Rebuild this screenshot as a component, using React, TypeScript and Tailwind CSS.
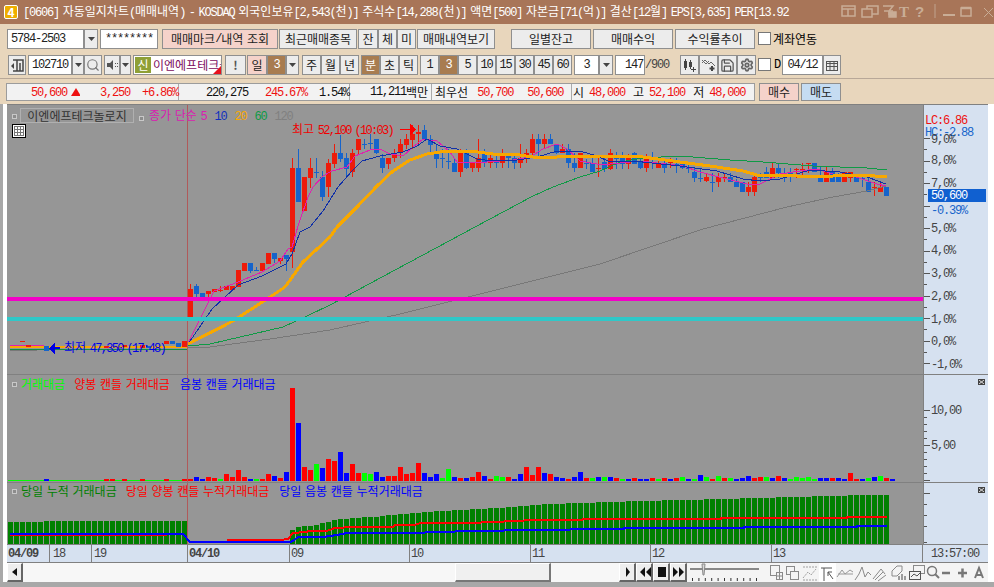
import React from "react";
import { Search, Save, Settings } from "lucide-react";

// hangul runs are full width, everything else is half width like Gulim
const T = ({ s, m = "tracking-[-1.2px]" }: { s: string; m?: string }) => (
  <>
    {s.split(/([가-힣 ]+)/).map((p, i) =>
      /^[가-힣 ]+$/.test(p) ? (
        <span key={i}>{p}</span>
      ) : (
        <span key={i} className={`font-['Liberation_Mono'] ${m}`}>
          {p}
        </span>
      )
    )}
  </>
);

type Candle = [number, number, number, number, "r" | "b"];

// wick top, body top, body bottom, wick bottom, x = 190 + 6 * index
const candles: Candle[] = [
  [285,290,319,319,"r"],[285,287,295,298,"b"],[294,294,298,298,"b"],[292,292,295,298,"r"],[290,290,293,293,"r"],
  [287,291,292,293,"r"],[287,287,291,291,"r"],[287,287,291,291,"r"],[271,271,288,288,"r"],[264,264,272,272,"r"],
  [264,264,272,274,"b"],[268,271,272,272,"b"],[264,264,272,272,"r"],[254,254,265,265,"r"],[254,254,260,264,"b"],
  [259,259,262,265,"r"],[256,256,260,272,"b"],[159,169,253,269,"r"],[150,169,203,203,"b"],[178,178,212,212,"r"],
  [159,169,179,189,"r"],[159,173,174,179,"b"],[172,178,198,202,"b"],[160,164,188,198,"r"],[145,154,165,169,"r"],
  [136,154,160,163,"b"],[154,159,170,179,"b"],[150,154,173,178,"r"],[140,140,151,156,"r"],[140,145,146,150,"b"],
  [135,144,145,150,"b"],[140,140,154,155,"b"],[155,159,169,174,"b"],[159,159,165,170,"r"],[150,154,159,163,"r"],
  [140,145,154,159,"r"],[135,140,146,150,"r"],[126,135,141,150,"r"],[126,133,135,145,"r"],[126,131,140,140,"b"],
  [136,140,146,154,"b"],[145,154,160,169,"b"],[150,159,160,169,"b"],[150,162,163,170,"b"],[160,164,173,173,"b"],
  [150,154,173,178,"r"],[150,154,169,170,"b"],[164,164,169,173,"r"],[140,159,169,173,"r"],[150,154,164,168,"b"],
  [154,159,164,169,"r"],[154,162,164,169,"b"],[150,154,164,169,"r"],[154,154,159,169,"b"],[154,159,164,170,"b"],
  [145,159,164,169,"r"],[150,154,159,164,"r"],[135,140,154,159,"r"],[135,140,145,159,"b"],[135,140,145,150,"r"],
  [135,140,145,145,"b"],[145,145,154,155,"b"],[145,150,154,154,"r"],[145,150,164,169,"b"],[154,164,169,173,"b"],
  [154,154,169,169,"r"],[160,164,165,170,"b"],[159,164,173,173,"b"],[159,169,170,178,"r"],[159,163,170,173,"b"],
  [150,154,170,171,"r"],[153,159,160,170,"b"],[153,159,165,170,"b"],[155,159,165,170,"r"],[153,154,165,165,"b"],
  [159,163,169,170,"b"],[155,159,169,173,"r"],[153,159,160,170,"b"],[159,164,169,169,"r"],[159,164,169,174,"b"],
  [159,162,164,169,"r"],[159,165,166,174,"b"],[164,164,169,170,"b"],[164,169,170,174,"b"],[169,173,179,183,"b"],
  [169,179,180,183,"b"],[174,178,182,183,"r"],[174,183,184,193,"b"],[174,178,183,188,"r"],[174,178,179,183,"r"],
  [174,178,183,183,"b"],[180,183,188,188,"b"],[183,183,193,193,"b"],[183,188,193,197,"r"],[174,178,193,197,"r"],
  [174,178,179,183,"b"],[168,173,179,179,"b"],[164,169,179,179,"r"],[164,169,174,179,"b"],[169,174,175,183,"b"],
  [169,174,175,183,"b"],[169,170,171,179,"r"],[164,170,171,179,"r"],[164,164,165,174,"r"],[164,164,173,173,"b"],
  [168,178,183,183,"b"],[168,173,183,183,"r"],[169,173,183,183,"b"],[174,178,183,183,"b"],[173,173,183,183,"r"],
  [173,173,179,183,"r"],[178,178,183,183,"b"],[178,179,180,188,"b"],[178,183,193,193,"b"],[183,188,189,197,"r"],
  [183,188,193,193,"r"],[188,188,197,197,"b"],
];

// pre open session squeezed at the left
const preOpen: [number, number, number, "r" | "b"][] = [
  [22,342,343,"r"],[28,346,348,"r"],[46,347,352,"b"],[106,347,349,"r"],[124,346,348,"r"],[142,346,349,"r"],
  [148,347,349,"b"],[166,342,345,"r"],[172,342,345,"b"],[178,344,348,"b"],[184,342,348,"r"],
];

const ma5 = "188,344 214,292 238,283 262,273 280,262 288,250 292,248 298,227 308,198 313,188 323,177 332,172 347,168 355,157 370,151 380,150 390,155 403,157 413,148 423,140 437,142 450,153 457,163 473,163 487,163 513,161 530,158 543,150 557,145 567,150 580,162 597,165 610,165 640,162 683,167 700,173 723,179 747,185 760,185 780,175 800,172 817,170 833,175 853,177 877,185 886,187";
const ma10 = "188,345 212,310 238,286 262,277 286,265 292,255 300,233 310,228 323,212 338,188 352,172 362,162 380,157 403,153 417,147 427,140 440,147 457,150 477,160 493,162 517,161 537,158 557,152 580,152 597,157 610,163 633,162 680,167 717,172 743,180 760,182 780,180 810,171 840,173 867,178 886,185";
const ma20 = "188,345 233,322 267,300 285,288 303,263 330,238 337,228 357,208 377,187 393,172 410,161 427,155 447,152 470,152 493,155 513,155 533,158 557,158 573,157 600,157 643,158 680,163 710,167 743,172 757,176 797,177 833,177 863,176 887,178";
const ma60 = "188,347 210,345 283,328 307,317 330,306 475,228 533,197 553,188 580,178 600,172 620,163 643,159 680,157 730,161 763,163 813,167 867,169 887,171";
const ma120 = "188,349 210,348 270,340 330,331 400,315 500,290 600,265 703,230 787,208 833,198 867,192 886,187";

const redSum = "10,536 167,536";
const redSum2 = "227,541 280,541 288,540 293,534 305,533 310,532 327,532 335,529 353,528 393,528 395,526 415,526 420,524 480,524 482,523 494,523 534,521 581,521 584,520 721,520 721,519 847,519 847,518 887,518";
const blueSum = "10,535 183,535 190,543 290,543 293,542 298,538 323,538 337,536 347,534 423,534 427,533 453,533 457,532 494,532 514,531 569,531 571,530 624,530 624,529 744,529 744,528 857,528 857,527 887,527";

// height and colour of the volume bars, x = 184 + 6 * index
const vol: [number, string][] = [
  [2,"r"],[2,"r"],[4,"b"],[2,"b"],[4,"r"],[3,"r"],[2,"g"],[7,"r"],[4,"r"],[11,"r"],[4,"r"],[2,"b"],[2,"g"],[2,"r"],[7,"r"],[5,"b"],[3,"r"],[9,"b"],
  [93,"r"],[58,"b"],[14,"r"],[11,"r"],[17,"g"],[13,"b"],[22,"r"],[20,"r"],[29,"b"],[8,"b"],[17,"r"],[8,"r"],[8,"g"],[7,"g"],[9,"b"],[4,"b"],[5,"r"],[5,"r"],
  [14,"r"],[7,"r"],[8,"r"],[18,"r"],[8,"b"],[4,"b"],[7,"b"],[3,"g"],[12,"g"],[4,"b"],[3,"r"],[3,"b"],[4,"r"],[9,"r"],[5,"b"],[2,"r"],[5,"g"],
  [4,"g"],[4,"r"],[2,"b"],[7,"b"],[14,"r"],[6,"r"],[14,"r"],[8,"b"],[7,"r"],[4,"b"],[3,"b"],[2,"r"],[4,"b"],[9,"b"],[3,"r"],[3,"g"],[4,"b"],[4,"g"],[4,"b"],
  [3,"r"],[2,"g"],[2,"b"],[3,"r"],[2,"b"],[2,"b"],[3,"r"],[2,"g"],[3,"r"],[2,"b"],[3,"r"],[4,"g"],[2,"b"],[2,"g"],[6,"b"],[4,"g"],[2,"r"],[5,"g"],[3,"r"],
  [3,"g"],[2,"b"],[3,"b"],[5,"b"],[3,"r"],[4,"r"],[4,"g"],[3,"b"],[5,"r"],[3,"b"],[2,"g"],[4,"g"],[3,"g"],[4,"g"],[2,"g"],[3,"b"],[3,"b"],[3,"r"],[3,"b"],
  [2,"b"],[8,"r"],[2,"r"],[2,"b"],[3,"g"],[4,"b"],[5,"g"],[3,"r"],[2,"b"],
];
const volColor: Record<string, string> = { r: "#ff0000", b: "#0000ff", g: "#00ff00" };

const sumTop: [number, number][] = [
  [290,533],[296,528],[308,527],[320,525],[326,523],[335,521],[340,520],[352,519],[370,518],[382,517],[400,515],[412,514],[424,513],[442,512],
  [497,509],[520,507],[545,505],[580,504],[615,503],[640,502],[680,501],[720,500],[755,499],[790,498],[830,497],[865,496],[886,496],
];
const topAt = (x: number) => {
  for (let i = 1; i < sumTop.length; i++) {
    if (x <= sumTop[i][0]) {
      const [x0, y0] = sumTop[i - 1];
      const [x1, y1] = sumTop[i];
      return Math.round(y0 + ((y1 - y0) * (x - x0)) / (x1 - x0));
    }
  }
  return 496;
};

const Line = ({ p, c, w = 1 }: { p: string; c: string; w?: number }) => (
  <polyline points={p} fill="none" stroke={c} strokeWidth={w} />
);

const Btn = ({ className = "", children }: { className?: string; children?: React.ReactNode }) => (
  <div className={`flex h-full shrink-0 items-center justify-center overflow-hidden border border-[#8f8f8f] text-[#222] ${className}`}>
    {children}
  </div>
);

const Drop = ({ className = "" }: { className?: string }) => (
  <Btn className={`bg-[#ececec] ${className}`}>
    <svg width="7" height="4"><polygon points="0,0 7,0 3.5,4" fill="#444" /></svg>
  </Btn>
);

const Square = () => <span className="mt-[1px] inline-block h-[5px] w-[5px] border border-[#c8c8c8] bg-[#8c8c8c]" />;

const CloseMini = () => (
  <div className="absolute right-[3px] top-[4px] flex h-[6px] w-[7px] items-center justify-center bg-[#444]">
    <svg width="5" height="4"><path d="M0 0L5 4M5 0L0 4" stroke="#ddd" /></svg>
  </div>
);

const axis1 = [
  ["9,0%", 139],["8,0%", 160],["7,0%", 183],["5,0%", 228],["4,0%", 250],["3,0%", 273],["2,0%", 296],["1,0%", 319],["0,0%", 341],["-1,0%", 364],
] as [string, number][];

const TitleIcons = () => (
  <svg width="153" height="24" viewBox="841 0 153 24" className="shrink-0" fill="none" stroke="#c9ad96" strokeWidth="1.5">
    <rect x="842" y="6" width="13" height="10" />
    <path d="M842 9H855M848 9V16" />
    <rect x="867" y="6" width="11" height="8" />
    <rect x="862" y="9" width="10" height="8" fill="#a87558" />
    <path d="M883 6H893L889 11V15M884 11H893" />
    <rect x="889" y="12" width="7" height="5" fill="#c9ad96" />
    <text x="899" y="17" fill="#c9ad96" stroke="none" fontSize="15" fontWeight="700" fontFamily="Liberation Serif">T</text>
    <text x="915" y="17" fill="#c9ad96" stroke="none" fontSize="15" fontWeight="700" fontFamily="Liberation Sans">?</text>
    <path d="M935 4V18" stroke="#b9957c" />
    <path d="M943 15H955" strokeWidth="2" />
    <rect x="961" y="8" width="10" height="8" />
    <path d="M961 8H971" strokeWidth="2.5" />
    <path d="M984 8L993 17M993 8L984 17" strokeWidth="1" />
  </svg>
);

const BottomIcons = () => (
  <svg width="218" height="20" viewBox="770 0 218 20" className="shrink-0" fill="none" stroke="#8a8a8a">
    <rect x="770.5" y="2.5" width="9" height="10" />
    <rect x="776.5" y="9.5" width="6" height="7" fill="#f4f4f4" />
    <path d="M776 13H783M779.5 9V17" />
    <rect x="786.5" y="3.5" width="8" height="8" />
    <rect x="790.5" y="8.5" width="8" height="8" fill="#f4f4f4" />
    <path d="M803 15L808 9L811 12L816 6M803 4H817M803 17H817" strokeDasharray="2 1" stroke="#a0a0a0" />
    <rect x="819" y="0" width="17" height="20" fill="#fff" stroke="none" />
    <path d="M821 5H832M824 5V18" stroke="#555" />
    <path d="M833 16L828 9M828 9V13M828 9H832" stroke="#555" />
    <path d="M837 14L842 7L845 11L850 7L853 9M838 11H853" stroke="#999" />
    <path d="M855 17L859 11L862 4L865 14L868 9L871 12" />
    <path d="M873 16L881 6L885 11M875 17L883 9M878 18L886 12" />
    <path d="M892 8L897 3H902V8L897 13H892Z" />
    <path d="M899 13V17M902 11V17M905 13V17" stroke="#444" />
    <rect x="913.5" y="2.5" width="11" height="8" />
    <rect x="909.5" y="8.5" width="11" height="8" fill="#f4f4f4" stroke="#555" />
    <path d="M911 14L914 11L917 13L920 10" stroke="#555" />
    <circle cx="932" cy="8" r="4.5" strokeWidth="1.5" stroke="#777" />
    <path d="M935 11L939 15" strokeWidth="2" stroke="#777" />
    <path d="M942 10H950" strokeWidth="2.5" stroke="#777" />
    <path d="M958 10H967M962.5 5.5V14.5" strokeWidth="2.5" stroke="#777" />
    <path d="M975 15L979 5L983 15M976.5 12H981.5" strokeWidth="2" stroke="#777" />
  </svg>
);

export default function App() {
  return (
    <div className="flex h-[587px] w-[994px] flex-col overflow-hidden bg-[#e8d6bc] font-['Noto_Sans_CJK_KR','Liberation_Sans',sans-serif] text-[12px] leading-[14px] [word-spacing:1px]">
      {/* title bar */}
      <div className="flex h-[24px] shrink-0 items-center bg-[#a87558] text-white">
        <div className="ml-[4px] flex h-[14px] w-[14px] items-center justify-center rounded-[2px] border border-white bg-[#efae00] text-[12px] font-bold">4</div>
        <div className="ml-[5px] w-[818px] overflow-hidden whitespace-nowrap pr-0">
          <T s="[0606] 자동일지차트(매매내역) - KOSDAQ 외국인보유[2,543(천)] 주식수[14,288(천)] 액면[500] 자본금[71(억)] 결산[12월] EPS[3,635] PER[13.92" />
        </div>
        <TitleIcons />
      </div>

      {/* toolbars */}
      <div className="mt-[5px] flex h-[20px] shrink-0 pl-[7px]">
        <Btn className="w-[77px] justify-start bg-white pl-[3px]"><T s="5784-2503" /></Btn>
        <Drop className="w-[14px]" />
        <Btn className="ml-[2px] w-[58px] bg-white"><T s="********" /></Btn>
        <Btn className="ml-[4px] w-[116px] bg-[#f5d2ca]"><T s="매매마크/내역 조회" /></Btn>
        <Btn className="ml-[1px] w-[78px] bg-[#ececec]">최근매매종목</Btn>
        <Btn className="ml-[1px] w-[20px] bg-[#ececec]">잔</Btn>
        <Btn className="w-[19px] bg-[#ececec]">체</Btn>
        <Btn className="w-[19px] bg-[#ececec]">미</Btn>
        <Btn className="ml-[1px] w-[78px] bg-[#ececec]">매매내역보기</Btn>
        <Btn className="ml-[16px] w-[80px] bg-[#ececec]">일별잔고</Btn>
        <Btn className="ml-[2px] w-[80px] bg-[#ececec]">매매수익</Btn>
        <Btn className="ml-[2px] w-[80px] bg-[#ececec]">수익률추이</Btn>
        <div className="ml-[3px] mt-[3px] h-[13px] w-[13px] border border-[#777] bg-white" />
        <div className="ml-[2px] flex items-center">계좌연동</div>
      </div>

      <div className="mt-[6px] flex h-[20px] shrink-0 pl-[8px]">
        <Btn className="w-[18px] bg-[#ececec]">
          <svg width="14" height="14" fill="none" stroke="#444" strokeWidth="1.5"><path d="M3 2H13V13H3" /><path d="M7 2V13M10 5V13" /><polygon points="1,8 4,5 4,11" fill="#444" stroke="none" /></svg>
        </Btn>
        <Btn className="ml-[2px] w-[44px] bg-white"><T s="102710" /></Btn>
        <Drop className="w-[12px]" />
        <Btn className="w-[18px] bg-[#ececec]"><Search size={14} color="#777" strokeWidth={2} /></Btn>
        <Btn className="ml-[2px] w-[16px] bg-[#ececec]">
          <svg width="12" height="12" fill="#555"><polygon points="1,4 4,4 7,1 7,11 4,8 1,8" /><rect x="9" y="4" width="1" height="1" /><rect x="9" y="7" width="1" height="1" /><rect x="11" y="4" width="1" height="1" /><rect x="11" y="7" width="1" height="1" /></svg>
        </Btn>
        <Drop className="w-[11px]" />
        <Btn className="relative ml-[2px] w-[89px] justify-start bg-white pl-[1px]">
          <span className="flex h-[16px] w-[16px] shrink-0 items-center justify-center bg-[#8fa035] text-white">신</span>
          <span className="ml-[2px] whitespace-nowrap text-[#7c0b5e]">이엔에프테크놀로지</span>
          <svg className="absolute bottom-0 right-0" width="8" height="8"><polygon points="8,0 8,8 0,8" fill="#e8101c" /></svg>
        </Btn>
        <Btn className="ml-[3px] w-[21px] bg-[#ececec] font-bold text-[#555]">!</Btn>
        <Btn className="ml-[1px] w-[20px] bg-[#f5d2ca]">일</Btn>
        <Btn className="w-[19px] bg-[#a87c50] text-white"><T s="3" /></Btn>
        <Drop className="w-[13px]" />
        <Btn className="ml-[3px] w-[19px] bg-[#ececec]">주</Btn>
        <Btn className="w-[19px] bg-[#ececec]">월</Btn>
        <Btn className="w-[19px] bg-[#ececec]">년</Btn>
        <Btn className="ml-[2px] w-[19px] bg-[#a87c50] text-white">분</Btn>
        <Btn className="w-[19px] bg-[#ececec]">초</Btn>
        <Btn className="w-[19px] bg-[#ececec]">틱</Btn>
        <Btn className="ml-[2px] w-[19px] bg-[#ececec]"><T s="1" /></Btn>
        <Btn className="w-[19px] bg-[#a87c50] text-white"><T s="3" /></Btn>
        <Btn className="w-[19px] bg-[#ececec]"><T s="5" /></Btn>
        <Btn className="w-[19px] bg-[#ececec]"><T s="10" /></Btn>
        <Btn className="w-[19px] bg-[#ececec]"><T s="15" /></Btn>
        <Btn className="w-[19px] bg-[#ececec]"><T s="30" /></Btn>
        <Btn className="w-[19px] bg-[#ececec]"><T s="45" /></Btn>
        <Btn className="w-[19px] bg-[#ececec]"><T s="60" /></Btn>
        <Btn className="ml-[2px] w-[25px] bg-white"><T s="3" /></Btn>
        <Drop className="w-[14px]" />
        <Btn className="ml-[2px] w-[30px] justify-end bg-white pr-[1px]"><T s="147" /></Btn>
        <div className="flex w-[24px] items-center text-[#444]"><T s="/900" /></div>
        <Btn className="ml-[11px] w-[19px] bg-[#ececec]">
          <svg width="15" height="14" fill="#444"><rect x="2" y="3" width="3" height="7" /><rect x="3" y="1" width="1" height="11" /><rect x="7" y="4" width="3" height="5" /><rect x="8" y="2" width="1" height="9" /><path d="M11 9h1v2h2v1h-2v2h-1v-2H9v-1h2z" /></svg>
        </Btn>
        <Btn className="w-[19px] bg-[#ececec]">
          <svg width="15" height="14" fill="none" stroke="#666"><path d="M1 5L4 2L8 6L10 4L14 8M1 2L5 6L8 3" /><path d="M11 8V13M8.5 10.5H13.5" stroke="#444" strokeWidth="2" /></svg>
        </Btn>
        <Btn className="w-[19px] bg-[#ececec]"><Save size={15} color="#555" strokeWidth={2} /></Btn>
        <Btn className="w-[19px] bg-[#ececec]"><Settings size={14} color="#666" strokeWidth={3} /></Btn>
        <div className="ml-[2px] mt-[3px] h-[13px] w-[13px] border border-[#777] bg-white" />
        <div className="ml-[3px] flex w-[7px] items-center"><T s="D" /></div>
        <Btn className="ml-[1px] w-[41px] bg-white"><T s="04/12" /></Btn>
        <Btn className="w-[18px] bg-[#ececec]">
          <svg width="12" height="11" fill="none" stroke="#555"><rect x="0.5" y="1.5" width="11" height="9" /><path d="M0 3.5H12M0 6.5H12M4 2V11M8 2V11" /></svg>
        </Btn>
      </div>

      <div className="mt-[3px] h-[1px] shrink-0 bg-[#b8a898]" />

      {/* quote line */}
      <div className="mt-[4px] flex h-[18px] shrink-0 pl-[6px]">
        <div className="flex h-full w-[749px] border border-[#9c9c9c] bg-[#f2f2f2] text-[#ee1111]">
          <div className="flex w-[172px] items-center border-r border-[#aaa]">
            <span className="ml-[24px]"><T s="50,600" /></span>
            <svg className="ml-[4px]" width="10" height="8"><polygon points="5,0 10,8 0,8" fill="#ee1111" /></svg>
            <span className="ml-[20px]"><T s="3,250" /></span>
            <span className="ml-[12px]"><T s="+6.86%" /></span>
          </div>
          <div className="flex w-[171px] items-center border-r border-[#aaa]">
            <span className="ml-[27px] text-[#111]"><T s="220,275" /></span>
            <span className="ml-[17px]"><T s="245.67%" /></span>
            <span className="ml-[12px] text-[#111]"><T s="1.54%" /></span>
          </div>
          <div className="flex w-[82px] items-center justify-end border-r border-[#aaa] pr-[3px] text-[#111]">
            <T s="11,211백만" />
          </div>
          <div className="flex w-[140px] items-center border-r border-[#aaa]">
            <span className="ml-[3px] text-[#111]">최우선</span>
            <span className="ml-[9px]"><T s="50,700" /></span>
            <span className="ml-[14px]"><T s="50,600" /></span>
          </div>
          <div className="flex flex-1 items-center">
            <span className="ml-[1px] text-[#111]">시</span>
            <span className="ml-[5px]"><T s="48,000" /></span>
            <span className="ml-[8px] text-[#111]">고</span>
            <span className="ml-[5px]"><T s="52,100" /></span>
            <span className="ml-[8px] text-[#111]">저</span>
            <span className="ml-[5px]"><T s="48,000" /></span>
          </div>
        </div>
        <Btn className="ml-[4px] w-[40px] bg-[#f5d2ca]">매수</Btn>
        <Btn className="ml-[2px] w-[40px] bg-[#c5dcf2]">매도</Btn>
      </div>

      {/* chart */}
      <div className="mt-[3px] flex flex-1 flex-col border-l-[3px] border-[#a8a8a8] bg-white pl-[4px]">
        <div className="h-[1px] w-[981px] bg-[#808080]" />

        {/* price pane */}
        <div className="flex h-[269px] w-[981px]">
          <div className="relative h-full w-[916px] bg-[#969696]">
            <svg width="916" height="269" viewBox="7 106 916 269" shapeRendering="crispEdges" className="block">
              <rect x="187" y="106" width="1" height="269" fill="#b05a5a" />
              <Line p="10,347 44,347" c="#e020b0" w={2} />
              <Line p="10,351 37,351" c="#787878" />
              <Line p="10,350 187,350" c="#109040" />
              <Line p="10,348 187,348" c="#f8a800" w={2} />
              {preOpen.map(([x, t, b, c], i) => (
                <rect key={i} x={x - 2} y={t} width="5" height={b - t} fill={c === "r" ? "#ee1b0a" : "#1664cb"} />
              ))}
              {candles.map(([wt, bt, bb, wb, c], i) => {
                const x = 190 + i * 6;
                const col = c === "r" ? "#ee1b0a" : "#1664cb";
                return (
                  <g key={i}>
                    <rect x={x} y={wt} width="1" height={wb - wt} fill={col} />
                    <rect x={x - 2} y={bt} width="5" height={bb - bt} fill={col} />
                  </g>
                );
              })}
              <Line p={ma120} c="#787878" w={1} />
              <Line p={ma60} c="#0f9a45" w={1} />
              <Line p={ma5} c="#e020b0" w={1} />
              <Line p={ma10} c="#1030a8" w={1} />
              <Line p={ma20} c="#f8a800" w={3} />
              <rect x="7" y="298" width="916" height="4" fill="#f400c8" />
              <rect x="7" y="318" width="916" height="4" fill="#2fc8c8" />
              <path d="M400 130H411" stroke="#ff0000" strokeWidth="1" />
              <polygon points="410,125 416,130 410,136" fill="#ff0000" />
              <rect x="44" y="347" width="5" height="5" fill="#1664cb" />
              <polygon points="55,344 49,349.5 55,355" fill="#0000e6" />
              <path d="M55 349H60" stroke="#0000e6" strokeWidth="2" />
            </svg>

            <div className="absolute left-[5px] top-[3px] flex h-[15px] items-center">
              <Square />
              <div className="ml-[3px] flex h-[15px] w-[114px] items-center justify-center border border-[#b0b0b0] text-[#333]">이엔에프테크놀로지</div>
              <span className="ml-[5px]"><Square /></span>
              <span className="ml-[5px] text-[#d820b0]"><T s="종가 단순 5" /></span>
              <span className="ml-[8px] text-[#1030c0]"><T s="10" /></span>
              <span className="ml-[8px] text-[#f8a800]"><T s="20" /></span>
              <span className="ml-[8px] text-[#0f9a45]"><T s="60" /></span>
              <span className="ml-[8px] text-[#808080]"><T s="120" /></span>
            </div>
            <div className="absolute left-[5px] top-[19px] flex h-[14px] w-[14px] items-center justify-center border border-black bg-white">
              <svg width="10" height="10" fill="none" stroke="#777"><rect x="0.5" y="0.5" width="9" height="9" /><path d="M0 3.5H10M0 6.5H10M3.5 0V10M6.5 0V10" /></svg>
            </div>
            <span className="absolute left-[285px] top-[17px] whitespace-nowrap text-[#f00000]"><T s="최고 52,100 (10:03)" m="tracking-[-1.7px]" /></span>
            <span className="absolute left-[57px] top-[235px] whitespace-nowrap text-[#0000e6]"><T s="최저 47,350 (17:48)" m="tracking-[-1.7px]" /></span>
          </div>

          <div className="relative h-full w-[65px] border-l border-[#808080] bg-[#d6e1f0] text-[#444]">
            <svg width="8" height="269" viewBox="923 106 8 269" className="absolute left-0 top-0" shapeRendering="crispEdges">
              {Array.from({ length: 21 }, (_, i) => (
                <rect key={i} x="923" y={Math.round(139 + i * 11.25)} width={i % 2 ? 3 : 6} height="1" fill="#555" />
              ))}
            </svg>
            <span className="absolute left-[1px] top-[7px] text-[#ee1111]"><T s="LC:6.86" /></span>
            <span className="absolute left-[1px] top-[19px] text-[#1664cb]"><T s="HC:-2.88" /></span>
            {axis1.map(([t, y]) => (
              <span key={t} className="absolute left-[7px]" style={{ top: y - 113 }}><T s={t} /></span>
            ))}
            <div className="absolute left-[4px] top-[84px] flex h-[13px] w-[58px] items-center bg-[#1060d0] pl-[3px] text-white"><T s="50,600" /></div>
            <span className="absolute left-[7px] top-[97px] text-[#1664cb]"><T s="-0.39%" /></span>
          </div>
        </div>

        <div className="h-[1px] w-[981px] bg-[#808080]" />

        {/* volume pane */}
        <div className="flex h-[107px] w-[981px]">
          <div className="relative h-full w-[916px] bg-[#969696]">
            <svg width="916" height="107" viewBox="7 376 916 107" shapeRendering="crispEdges" className="block">
              <rect x="187" y="376" width="1" height="107" fill="#b05a5a" />
              <rect x="8" y="481" width="179" height="1" fill="#00ff00" />
              <rect x="44" y="480" width="5" height="2" fill="#0000ff" />
              <rect x="104" y="480" width="5" height="2" fill="#ff0000" />
              <rect x="110" y="480" width="5" height="2" fill="#ff0000" />
              <rect x="122" y="480" width="5" height="2" fill="#ff0000" />
              <rect x="140" y="480" width="5" height="2" fill="#ff0000" />
              <rect x="164" y="480" width="5" height="2" fill="#ff0000" />
              {vol.map(([h, c], i) => (
                <rect key={i} x={182 + i * 6} y={482 - h} width="5" height={h} fill={volColor[c]} />
              ))}
            </svg>
            <div className="absolute left-[5px] top-[2px] flex h-[14px] items-center">
              <Square />
              <span className="ml-[4px] text-[#00ff00]">거래대금</span>
              <span className="ml-[9px] text-[#ff0000]">양봉 캔들 거래대금</span>
              <span className="ml-[10px] text-[#0000ff]">음봉 캔들 거래대금</span>
            </div>
          </div>
          <div className="relative h-full w-[65px] border-l border-[#808080] bg-[#d6e1f0] text-[#444]">
            <svg width="8" height="107" viewBox="923 376 8 107" className="absolute left-0 top-0" shapeRendering="crispEdges">
              {Array.from({ length: 11 }, (_, i) => (
                <rect key={i} x="923" y={Math.round(481 - i * 7)} width={i % 5 ? 3 : 6} height="1" fill="#555" />
              ))}
            </svg>
            <span className="absolute left-[7px] top-[27px]"><T s="10,00" /></span>
            <span className="absolute left-[7px] top-[62px]"><T s="5,00" /></span>
            <CloseMini />
          </div>
        </div>

        <div className="h-[1px] w-[981px] bg-[#808080]" />

        {/* accumulated pane */}
        <div className="flex h-[61px] w-[981px]">
          <div className="relative h-full w-[916px] bg-[#969696]">
            <svg width="916" height="61" viewBox="7 484 916 61" shapeRendering="crispEdges" className="block">
              <rect x="187" y="484" width="1" height="61" fill="#b05a5a" />
              {Array.from({ length: 30 }, (_, i) => {
                const t = i < 6 ? 523 : 522;
                return <rect key={i} x={8 + i * 6} y={t} width="5" height={545 - t} fill="#008000" />;
              })}
              {Array.from({ length: 100 }, (_, i) => {
                const x = 292 + i * 6;
                const t = topAt(x);
                return <rect key={i} x={x - 2} y={t} width="5" height={545 - t} fill="#008000" />;
              })}
              <Line p={redSum} c="#ff0000" w={2} />
              <Line p={redSum2} c="#ff0000" w={2} />
              <Line p={blueSum} c="#0000ff" w={2} />
            </svg>
            <div className="absolute left-[5px] top-[1px] flex h-[14px] items-center">
              <Square />
              <span className="ml-[4px] text-[#008000]">당일 누적 거래대금</span>
              <span className="ml-[9px] text-[#ff0000]">당일 양봉 캔들 누적거래대금</span>
              <span className="ml-[10px] text-[#0000ff]">당일 음봉 캔들 누적거래대금</span>
            </div>
          </div>
          <div className="relative h-full w-[65px] border-l border-[#808080] bg-[#d6e1f0]">
            <svg width="8" height="61" viewBox="923 484 8 61" className="absolute left-0 top-0" shapeRendering="crispEdges">
              {[494, 505, 516, 527, 543].map((y) => (
                <rect key={y} x="923" y={y} width={y === 494 ? 6 : 3} height="1" fill="#555" />
              ))}
            </svg>
            <CloseMini />
          </div>
        </div>

        <div className="h-[1px] w-[981px] bg-[#808080]" />

        {/* time axis */}
        <div className="flex h-[17px] w-[981px] bg-[#d6e1f0] text-[#444]">
          <div className="flex w-[42px] items-center pl-[1px] font-bold"><T s="04/09" /></div>
          <div className="flex w-[42px] items-center border-l border-[#808080] pl-[3px]"><T s="18" /></div>
          <div className="flex w-[96px] items-center border-l border-[#808080] pl-[2px]"><T s="19" /></div>
          <div className="flex w-[102px] items-center border-l border-[#808080] pl-[1px] font-bold"><T s="04/10" /></div>
          <div className="flex w-[120px] items-center border-l border-[#808080] pl-[1px]"><T s="09" /></div>
          <div className="flex w-[121px] items-center border-l border-[#808080] pl-[1px]"><T s="10" /></div>
          <div className="flex w-[120px] items-center border-l border-[#808080] pl-[1px]"><T s="11" /></div>
          <div className="flex w-[121px] items-center border-l border-[#808080] pl-[1px]"><T s="12" /></div>
          <div className="flex w-[151px] items-center border-l border-[#808080] pl-[1px]"><T s="13" /></div>
          <div className="flex flex-1 items-center border-l border-[#808080] pl-[8px]"><T s="13:57:00" /></div>
        </div>

        <div className="h-[1px] w-[981px] bg-[#808080]" />

        {/* scroll bar */}
        <div className="flex h-[19px] w-[981px] bg-[#f4f4f4]">
          <Btn className="w-[16px] border-b-2 border-r-2 border-b-[#666] border-r-[#666] border-l-white border-t-white bg-[#eee]">
            <svg width="5" height="8"><polygon points="5,0 5,8 0,4" fill="#111" /></svg>
          </Btn>
          <div className="w-[432px] bg-[#f7f7f7]" />
          <Btn className="w-[96px] border-b-2 border-r-2 border-b-[#777] border-r-[#777] border-l-white border-t-white bg-[#f0f0f0]" />
          <div className="w-[68px] bg-[#f7f7f7]" />
          {["M6 3L10 8L6 13Z", "M8 3V13L3 8ZM14 3V13L9 8Z", "M4 3H12V13H4Z", "M2 3L7 8L2 13ZM8 3L13 8L8 13Z"].map((d) => (
            <Btn key={d} className="w-[17px] border-b-2 border-r-2 border-b-[#666] border-r-[#666] border-l-white border-t-white bg-[#eee]">
              <svg width="16" height="16" fill="#111"><path d={d} /></svg>
            </Btn>
          ))}
          <svg width="72" height="19" className="ml-[3px] shrink-0">
            <rect x="0" y="5" width="69" height="2" fill="#888" />
            <path d="M12 1H15L14 12H13Z" fill="#d8d8d8" stroke="#888" />
            {Array.from({ length: 11 }, (_, i) => (
              <rect key={i} x={2 + i * 6.4} y="15" width="1" height="3" fill="#333" />
            ))}
          </svg>
          <div className="ml-[8px]"><BottomIcons /></div>
        </div>

        <div className="ml-[-7px] flex-1 bg-[#a8a8a8]" />
      </div>
    </div>
  );
}
